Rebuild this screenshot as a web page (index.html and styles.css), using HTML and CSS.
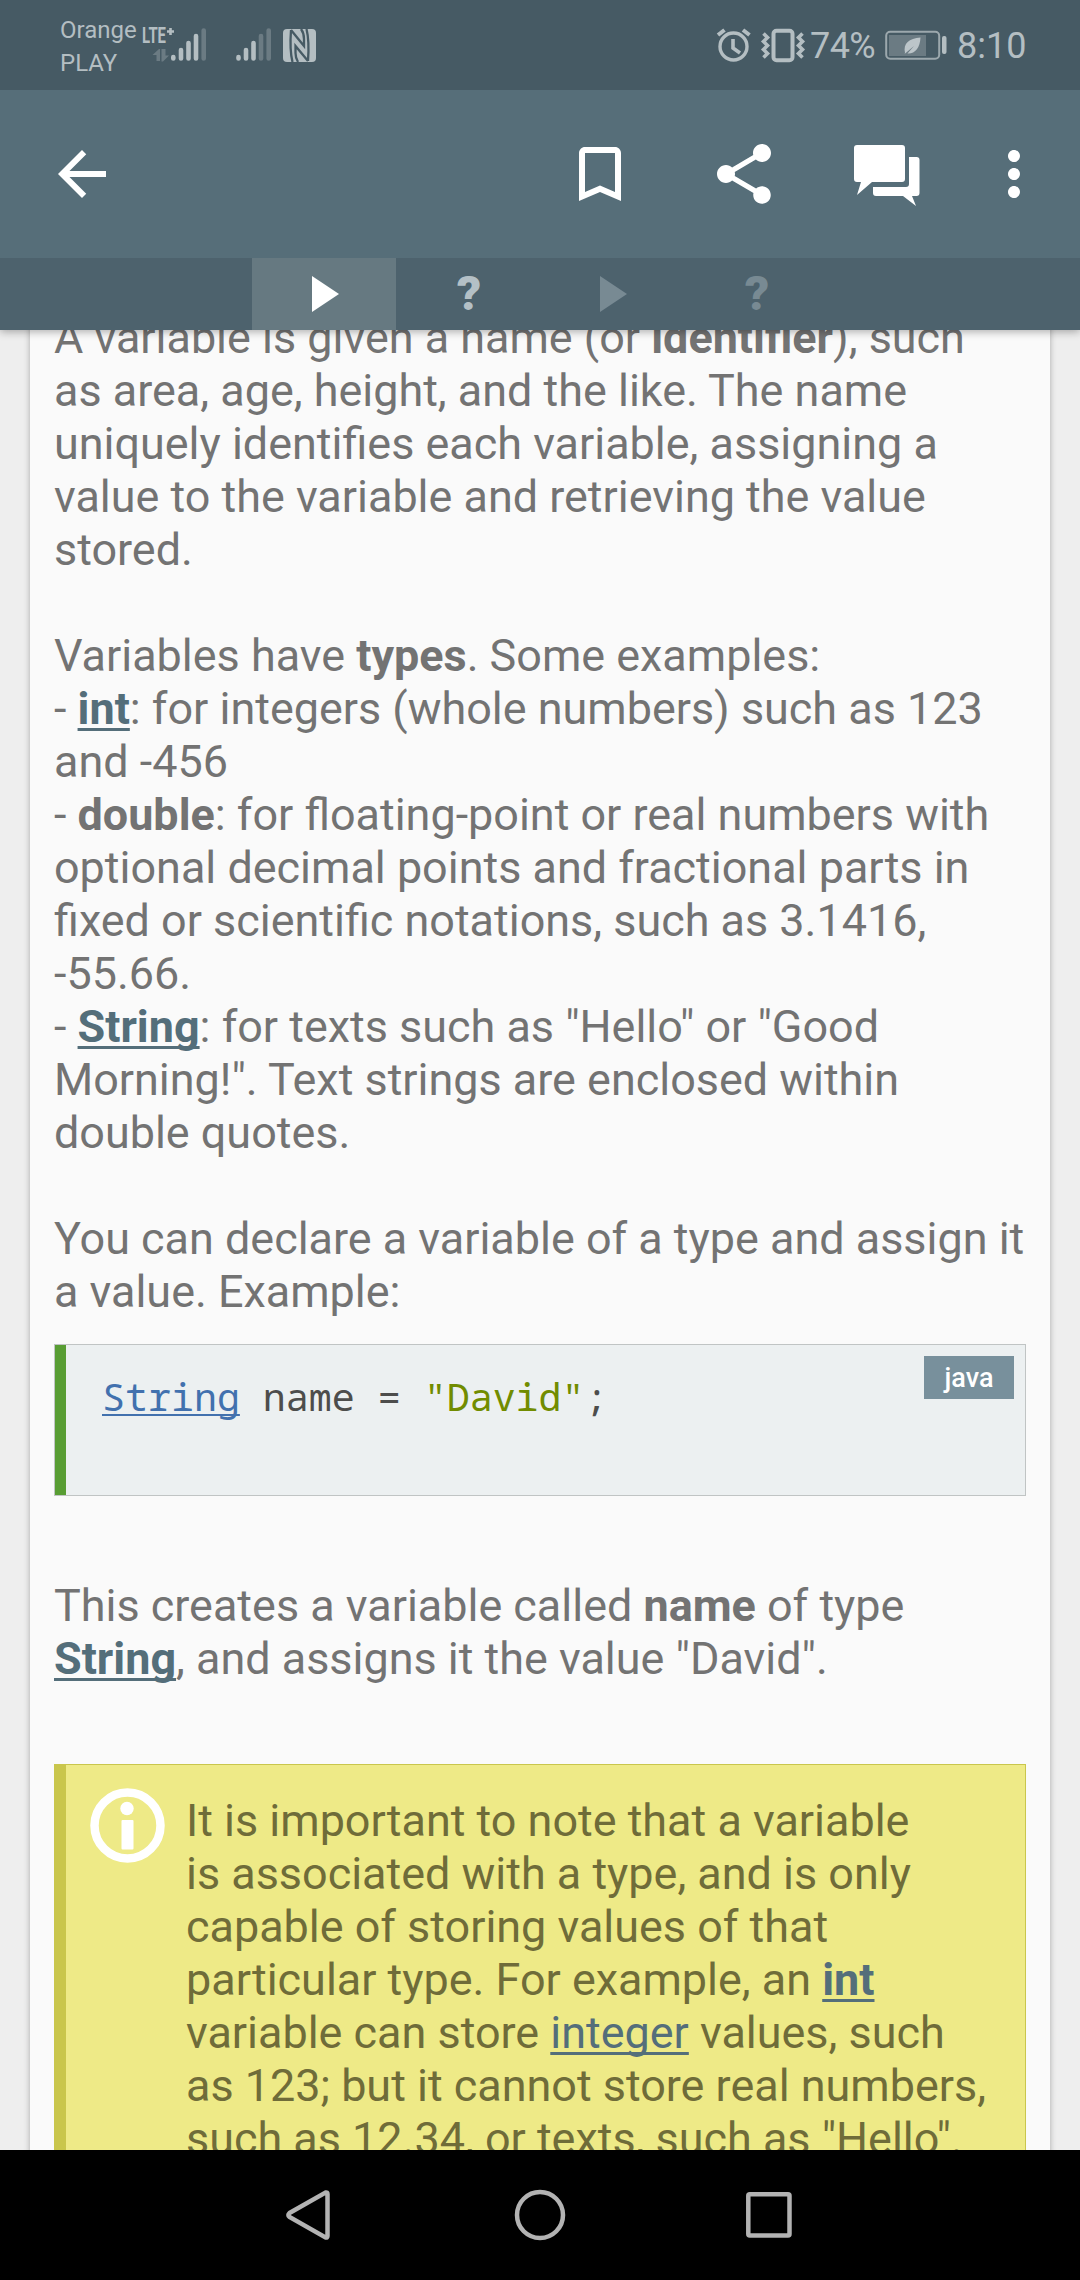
FILE: index.html
```html
<!DOCTYPE html>
<html lang="en">
<head>
<meta charset="utf-8">
<title>Variables</title>
<link rel="stylesheet" href="styles.css">
</head>
<body>
<div class="screen">
  <header class="status">
    <div class="carrier">Orange<br>PLAY</div>
    <svg class="signals" width="176" height="90" viewBox="142 0 176 90">
      <text class="network" x="142" y="43" textLength="24" lengthAdjust="spacingAndGlyphs">LTE</text>
      <path d="M167 31.500H174M170.500 28V35" fill="none" stroke="#b4bec2" stroke-width="2.600"/>
      <path fill="#6b7b83" d="M152.500 55L159 49H160V61H156.500V55ZM161.500 49H165.500V55.500H169L163 61.500H161.500Z"/>
      <g stroke="#b4bec2" stroke-width="4.600" stroke-linecap="round">
        <path d="M173.300 57V58.500M181 50V58.500M188.500 43V58.500M196 36V58.500M238.500 57V58.500M246 50V58.500M253.500 43V58.500"/>
        <path stroke="#6b7b83" d="M203.700 30.500V58.500M261 36V58.500M268.700 30.500V58.500"/>
      </g>
      <rect x="283" y="29" width="33" height="33" rx="4" fill="#b4bec2"/>
      <path d="M291 30L304 46V39Q304 33 301 29M308 61L295.500 46V53Q295.500 58 298 62M291 30Q289.500 50 292.500 62M308 61Q309.500 41 306.500 29" fill="none" stroke="#465a64" stroke-width="2.300"/>
    </svg>
    <div class="spacer"></div>
    <svg class="alerts" width="90" height="90" viewBox="716 0 90 90" fill="none" stroke="#b4bec2" stroke-width="3.400">
      <circle cx="733.500" cy="46.500" r="13.500"/>
      <path d="M733 39V48L740 53" stroke-width="3.600"/>
      <path d="M718 35L724.500 30M749.500 35L743 30" stroke-width="4"/>
      <rect x="773.500" y="30.800" width="19" height="29.400" rx="3" stroke-width="4"/>
      <path d="M763.500 33.500L767.500 37.500L763.500 41.500L767.500 45.500L763.500 49.500L767.500 53.500L763.500 57.500M802.500 33.500L798.500 37.500L802.500 41.500L798.500 45.500L802.500 49.500L798.500 53.500L802.500 57.500" stroke-width="3.600"/>
    </svg>
    <span class="percent">74%</span>
    <svg class="battery" width="62" height="90" viewBox="885 0 62 90">
      <rect x="886.200" y="31.800" width="53" height="27" rx="4" fill="none" stroke="#9ca8ad" stroke-width="2"/>
      <rect x="889" y="35" width="37" height="21" fill="#6b7b83"/>
      <path d="M905 53C903 43 909 38.500 920.500 37.500C920 48 915 54 907.500 53.500L914 46L904.500 54Z" fill="#bcc5c9"/>
      <rect x="942" y="36" width="4.500" height="18" rx="2" fill="#b4bec2"/>
    </svg>
    <span class="clock">8:10</span>
  </header>

  <nav class="toolbar">
    <svg class="icon" viewBox="0 0 24 24"><path d="M20 11H7.830l5.590-5.590L12 4l-8 8 8 8 1.410-1.410L7.830 13H20v-2z"/></svg>
    <div class="spacer"></div>
    <svg class="icon bookmark" viewBox="0 0 24 24"><path d="M17 3H7c-1.100 0-1.990.9-1.990 2L5 21l7-3 7 3V5c0-1.100-.9-2-2-2zm0 15l-5-2.180L7 18V5h10v13z"/></svg>
    <svg class="icon share" viewBox="0 0 24 24"><path d="M18 16.080c-.76 0-1.440.3-1.960.77L8.910 12.700c.05-.23.09-.46.09-.7s-.04-.47-.09-.7l7.050-4.110c.54.5 1.250.81 2.040.81 1.660 0 3-1.340 3-3s-1.340-3-3-3-3 1.340-3 3c0 .24.04.47.09.7L8.040 9.810C7.500 9.310 6.790 9 6 9c-1.660 0-3 1.340-3 3s1.340 3 3 3c.79 0 1.500-.31 2.040-.81l7.120 4.160c-.05.21-.08.43-.08.65 0 1.610 1.310 2.920 2.920 2.920 1.610 0 2.920-1.310 2.920-2.920s-1.310-2.920-2.920-2.920z"/></svg>
    <svg class="icon chat" viewBox="851 138 72 72"><path d="M857 145H902Q905 145 905 148V179Q905 182 902 182H872L857 195L861 182H857Q854 182 854 179V148Q854 145 857 145ZM909 157H916.500Q919.500 157 919.500 160V193Q919.500 196 916.500 196H912L916 206L903 196H876Q873 196 873 193V187H906Q909 187 909 184Z"/></svg>
    <svg class="icon more" viewBox="0 0 24 24"><path d="M12 8c1.100 0 2-.9 2-2s-.9-2-2-2-2 .9-2 2 .9 2 2 2zm0 2c-1.100 0-2 .9-2 2s.9 2 2 2 2-.9 2-2-.9-2-2-2zm0 6c-1.100 0-2 .9-2 2s.9 2 2 2 2-.9 2-2-.9-2-2-2z"/></svg>
  </nav>

  <div class="tabs">
    <div class="tab active"><svg class="play" viewBox="0 0 27 36"><path d="M0 0L27 18L0 36Z"/></svg></div>
    <div class="tab next">?</div>
    <div class="tab locked"><svg class="play" viewBox="0 0 27 36"><path d="M0 0L27 18L0 36Z"/></svg></div>
    <div class="tab locked">?</div>
  </div>

  <main class="page">
    <article class="card">
      <p>A variable is given a name (or <b>identifier</b>), such<br>as area, age, height, and the like. The name<br>uniquely identifies each variable, assigning a<br>value to the variable and retrieving the value<br>stored.</p>
      <p class="gap">Variables have <b>types</b>. Some examples:<br>- <a><b>int</b></a>: for integers (whole numbers) such as 123<br>and -456<br>- <b>double</b>: for floating-point or real numbers with<br>optional decimal points and fractional parts in<br>fixed or scientific notations, such as 3.1416,<br>-55.66.<br>- <a><b>String</b></a>: for texts such as "Hello" or "Good<br>Morning!". Text strings are enclosed within<br>double quotes.</p>
      <p class="gap">You can declare a variable of a type and assign it<br>a value. Example:</p>
      <div class="code">
        <code><span class="type">String</span> name = <span class="str">"David"</span>;</code>
        <span class="lang">java</span>
      </div>
      <p>This creates a variable called <b>name</b> of type<br><a><b>String</b></a>, and assigns it the value "David".</p>
      <aside class="note">
        <svg class="info" viewBox="0 0 75 75"><circle cx="37.500" cy="37.500" r="33" fill="none" stroke="#fff" stroke-width="8.500"/><circle cx="37" cy="20.500" r="6.700" fill="#fff"/><rect x="31.500" y="32" width="12" height="29.500" rx="1" fill="#fff"/></svg>
        <p>It is important to note that a variable<br>is associated with a type, and is only<br>capable of storing values of that<br>particular type. For example, an <a><b>int</b></a><br>variable can store <a>integer</a> values, such<br>as 123; but it cannot store real numbers,<br>such as 12.34, or texts, such as "Hello".</p>
      </aside>
    </article>
  </main>

  <footer class="navbar">
    <svg width="50" height="52" viewBox="284 2189 50 52"><path d="M289.500 2213L325.500 2192.500Q327.500 2192 327.500 2194V2236Q327.500 2238 325.500 2237.500L289.500 2217Q287.500 2215 289.500 2213Z"/></svg>
    <svg class="home" width="52" height="52" viewBox="514 2189 52 52"><circle cx="540" cy="2215" r="23"/></svg>
    <svg width="50" height="52" viewBox="744 2189 50 52"><rect x="748.300" y="2194.300" width="41.200" height="41.200" rx="1.500"/></svg>
  </footer>
</div>
</body>
</html>
```
FILE: styles.css
```css
* { box-sizing: border-box; }
body { margin: 0; font-family: Roboto, sans-serif; }
p { margin: 0; }
svg { display: block; flex: none; }

.screen {
  display: flex;
  flex-direction: column;
  width: 1080px;
  height: 2280px;
  overflow: hidden;
  background: #eee;
}
.spacer { flex: 1; }

.status {
  display: flex;
  flex: none;
  align-items: center;
  height: 90px;
  padding: 0 54px 0 60px;
  background: #465a64;
  color: #b4bec2;
}
.carrier {
  width: 82px;
  padding-top: 3px;
  font-size: 24px;
  line-height: 33px;
}
.network { fill: #b4bec2; font-size: 21.500px; font-weight: 700; }
.percent, .clock {
  padding-top: 2px;
  font-size: 36px;
  line-height: 42px;
  white-space: nowrap;
}
.percent { width: 79px; padding-left: 4px; letter-spacing: -.6px; }
.clock { width: 79px; padding-left: 10px; }

.toolbar {
  display: flex;
  flex: none;
  align-items: center;
  height: 168px;
  padding: 0 30px 0 46px;
  background: #566e79;
}
.icon { width: 72px; height: 72px; fill: #fff; }
.share { margin-left: 72px; }
.chat { margin-left: 71px; }
.more { margin-left: 55px; }

.tabs {
  display: flex;
  flex: none;
  justify-content: center;
  height: 72px;
  background: #4d626d;
  box-shadow: 0 2px 8px rgba(0, 0, 0, .3);
  clip-path: inset(0 0 -14px 0);
  z-index: 1;
}
.tab {
  display: flex;
  align-items: center;
  justify-content: center;
  width: 144px;
  padding-left: 2px;
  color: #b4c0c6;
  font-size: 48px;
  font-weight: 900;
  line-height: 48px;
}
.tab.active { background: #667981; color: #fff; }
.tab.locked { color: #788a93; }
.play { width: 27px; height: 36px; margin-left: 1px; fill: currentColor; }

.page {
  flex: 1;
  min-height: 0;
  padding: 0 30px;
  overflow: hidden;
}
.card {
  height: 1900px;
  margin-top: -19px;
  padding: 0 24px;
  background: #fafafa;
  box-shadow: 0 0 6px rgba(0, 0, 0, .3);
  color: #737373;
  font-size: 44.930px;
  line-height: 53px;
  white-space: nowrap;
}
.gap { margin-top: 53px; }
a {
  color: #546e7a;
  text-decoration: underline 2.5px;
  text-decoration-skip-ink: none;
  text-underline-offset: 4px;
}

.code {
  display: flex;
  align-items: flex-start;
  justify-content: space-between;
  height: 152px;
  margin: 26px 0 83px;
  padding: 11px 11px 0 35px;
  border: 1px solid #c0c4c4;
  background: #ecf0f1 linear-gradient(#589d33, #589d33) 0 0 / 11px 100% no-repeat;
}
code {
  padding: 17px 0 0 12px;
  color: #4d4d4c;
  font: 38.300px/46px "Droid Sans Mono", "Noto Sans Mono", "DejaVu Sans Mono", monospace;
}
.type {
  color: #4271ae;
  text-decoration: underline 2px;
  text-decoration-skip-ink: none;
  text-underline-offset: 3px;
}
.str { color: #718c00; }
.lang {
  width: 90px;
  height: 43px;
  padding-top: 1px;
  background: #78909c;
  color: #fff;
  font-size: 27px;
  font-weight: 500;
  line-height: 43px;
  text-align: center;
}

.note {
  display: flex;
  gap: 21px;
  height: 420px;
  margin-top: 79px;
  padding: 23px 0 0 24px;
  border: 1px solid #c9c64c;
  border-left-width: 12px;
  background: #eeea87;
  color: #6f6c39;
}
.note p { padding-top: 6px; }
.info { width: 75px; height: 75px; }

.navbar {
  display: flex;
  flex: none;
  align-items: center;
  justify-content: space-between;
  height: 130px;
  padding: 0 286px 0 284px;
  background: #000;
  fill: none;
  stroke: #b3b3b3;
  stroke-width: 4.500px;
}
.home { margin-left: 2px; }
```
